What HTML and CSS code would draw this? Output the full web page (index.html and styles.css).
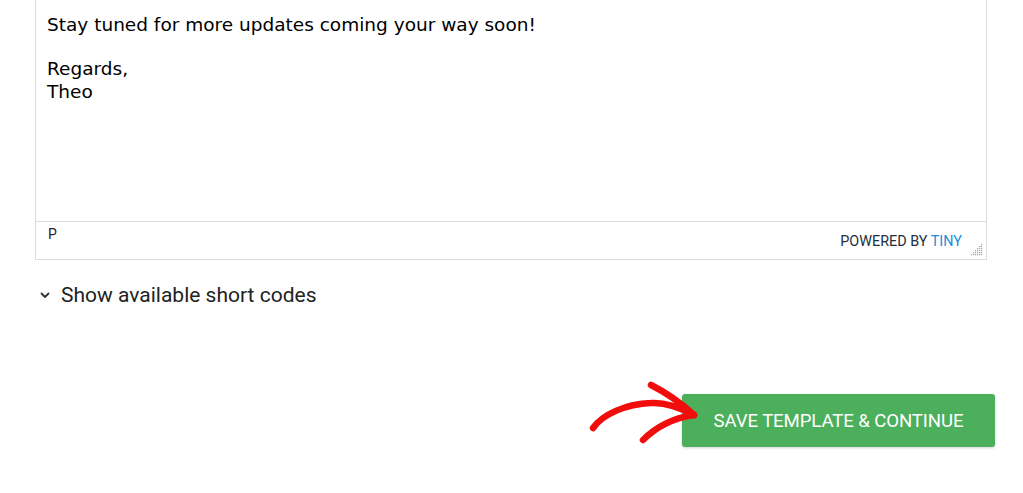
FILE: index.html
```html
<!DOCTYPE html>
<html lang="en">
<head>
<meta charset="utf-8">
<title>Email template</title>
<link rel="stylesheet" href="styles.css">
</head>
<body>
<div class="page">
  <div class="editor">
    <div class="edit-area">
      <p>Stay tuned for more updates coming your way soon!</p>
      <p>Regards,<br>Theo</p>
    </div>
    <div class="statusbar">
      <span class="path">P</span>
      <span class="brand">POWERED BY <span class="tiny">TINY</span></span>
      <svg class="grip" width="12" height="12" viewBox="0 0 12 12" aria-hidden="true">
        <g fill="#a0a0a0">
          <rect x="10" y="0" width="1.2" height="1.2"/>
          <rect x="8" y="2" width="1.2" height="1.2"/><rect x="10" y="2" width="1.2" height="1.2"/>
          <rect x="6" y="4" width="1.2" height="1.2"/><rect x="8" y="4" width="1.2" height="1.2"/><rect x="10" y="4" width="1.2" height="1.2"/>
          <rect x="4" y="6" width="1.2" height="1.2"/><rect x="6" y="6" width="1.2" height="1.2"/><rect x="8" y="6" width="1.2" height="1.2"/><rect x="10" y="6" width="1.2" height="1.2"/>
          <rect x="2" y="8" width="1.2" height="1.2"/><rect x="4" y="8" width="1.2" height="1.2"/><rect x="6" y="8" width="1.2" height="1.2"/><rect x="8" y="8" width="1.2" height="1.2"/><rect x="10" y="8" width="1.2" height="1.2"/>
          <rect x="0" y="10" width="1.2" height="1.2"/><rect x="2" y="10" width="1.2" height="1.2"/><rect x="4" y="10" width="1.2" height="1.2"/><rect x="6" y="10" width="1.2" height="1.2"/><rect x="8" y="10" width="1.2" height="1.2"/><rect x="10" y="10" width="1.2" height="1.2"/>
        </g>
      </svg>
    </div>
  </div>

  <div class="shortcodes">
    <svg class="chev" width="10" height="7" viewBox="0 0 10 7" aria-hidden="true">
      <path d="M1.5 1.5 L5 5 L8.5 1.5" fill="none" stroke="#333" stroke-width="1.8" stroke-linecap="round" stroke-linejoin="round"/>
    </svg>
    <span>Show available short codes</span>
  </div>

  <div class="actions">
    <div class="btn-wrap">
      <svg class="arrow" width="120" height="80" viewBox="0 0 120 80" aria-hidden="true">
        <g fill="none" stroke="#f20d0d" stroke-width="6.5" stroke-linecap="round" stroke-linejoin="round">
          <path d="M12 58 C22 44 45 34 70 33 C86 32 100 38 113 45"/>
          <path d="M70 15 C84 22 100 33 113 45"/>
          <path d="M62 70 C74 58 92 48 113 45"/>
        </g>
      </svg>
      <button class="save">SAVE TEMPLATE &amp; CONTINUE</button>
    </div>
  </div>
</div>
</body>
</html>
```

FILE: styles.css
```css
html, body {
  margin: 0;
  padding: 0;
  background: #fff;
}

.page {
  width: 1023px;
  height: 493px;
  overflow: hidden;
}

.editor {
  margin: -1px 0 0 35px;
  width: 950px;
  border: 1px solid #dcdcdc;
  display: flex;
  flex-direction: column;
}

.edit-area {
  height: 222px;
  box-sizing: border-box;
  padding: 13px 11px 0 11px;
  font-family: "DejaVu Sans", Verdana, sans-serif;
  font-size: 18.5px;
  line-height: 23px;
  color: #000;
  border-bottom: 1px solid #dcdcdc;
}

.edit-area p {
  margin: 0 0 21px 0;
}

.statusbar {
  height: 37px;
  display: flex;
  align-items: flex-start;
  padding: 0 3px 0 12px;
  font-family: Roboto, "Liberation Sans", sans-serif;
  color: #222f3e;
}

.path {
  font-size: 14px;
  margin-top: 4px;
  color: #222;
}

.brand {
  margin-left: auto;
  margin-top: 11px;
  font-size: 14.4px;
  color: #222f3e;
  margin-right: 9px;
}

.tiny {
  color: #1b8fd8;
}

.grip {
  margin-top: 22px;
}

.shortcodes {
  margin: 23px 0 0 40px;
  display: flex;
  align-items: center;
  gap: 11px;
  font-family: Roboto, "Liberation Sans", sans-serif;
  font-size: 21px;
  color: #222;
}

.chev {
  margin-top: 1px;
}

.actions {
  display: flex;
  justify-content: flex-end;
  padding-right: 28px;
  margin-top: 87px;
}

.btn-wrap {
  position: relative;
}

.arrow {
  position: absolute;
  left: -101px;
  top: -24px;
  z-index: 2;
}

.save {
  width: 313px;
  height: 53px;
  background: #4caf5c;
  color: #fff;
  border: 0;
  border-radius: 3px;
  font-family: Roboto, "Liberation Sans", sans-serif;
  font-size: 18.6px;
  letter-spacing: -0.1px;
  box-shadow: 0 1px 3px rgba(0,0,0,0.18);
  padding: 0;
}
```
